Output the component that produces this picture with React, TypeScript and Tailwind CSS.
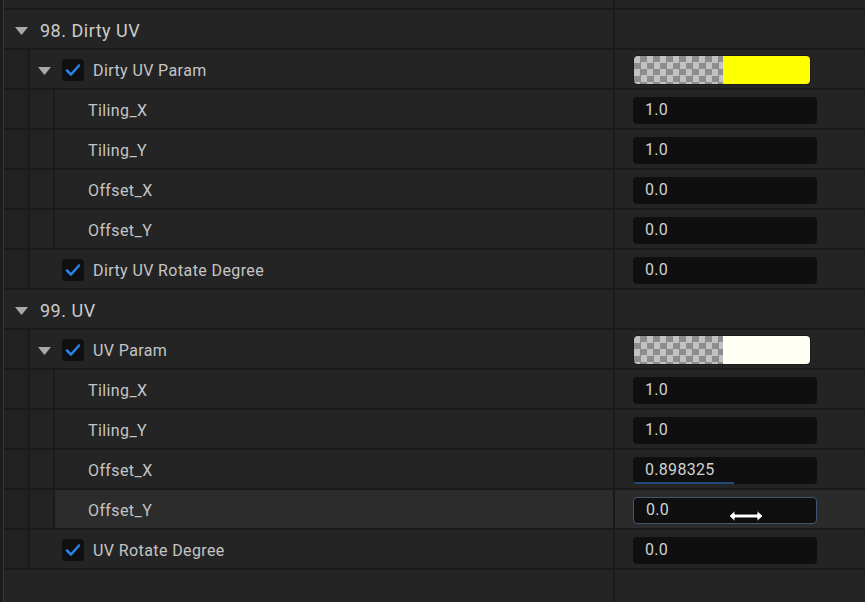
import React from "react";

type RowProps = {
  depth: number;
  highlight?: boolean;
  children: React.ReactNode;
  value?: React.ReactNode;
};

function Strip() {
  return <div className="w-[26px] shrink-0 bg-[#212121] border-r-2 border-[#1a1a1a]" />;
}

function Row({ depth, highlight, children, value }: RowProps) {
  return (
    <div className="flex h-10 border-b-2 border-[#1a1a1a]">
      <div className="flex w-[609px] shrink-0">
        {depth >= 1 && <Strip />}
        {depth >= 2 && <div className="w-[25px] shrink-0 bg-[#232323] border-r-2 border-[#1a1a1a]" />}
        <div className={"flex flex-1 items-center pt-[3px] " + (highlight ? "bg-[#2c2c2c]" : "")}>{children}</div>
      </div>
      <div
        className={
          "flex flex-1 items-center border-l-2 border-[#1a1a1a] pl-[18px] pt-[2px] " +
          (highlight ? "bg-[#2b2b2b]" : "")
        }
      >
        {value}
      </div>
    </div>
  );
}

function Arrow({ className }: { className?: string }) {
  return (
    <svg width="13" height="8" viewBox="0 0 13 8" className={className}>
      <path d="M0 0 H13 L6.5 8 Z" fill="#a9a9a9" />
    </svg>
  );
}

function Check() {
  return (
    <div className="flex h-[22px] w-[22px] shrink-0 items-center justify-center rounded-[4px] bg-[#0f0f0f]">
      <svg width="16" height="14" viewBox="0 0 16 14">
        <path d="M2 7.5 L6 11.5 L14 2.5" fill="none" stroke="#2a80e0" strokeWidth="2.6" strokeLinecap="round" strokeLinejoin="round" />
      </svg>
    </div>
  );
}

function NumBox({ v, focused, bar }: { v: string; focused?: boolean; bar?: number }) {
  return (
    <div
      className={
        "relative flex h-[27px] w-[184px] items-center overflow-hidden rounded-[4px] bg-[#0f0f0f] pl-[12px] text-[16px] tracking-[0.3px] text-[#d2d2d2] " +
        (focused ? "border border-[#3d5672]" : "")
      }
    >
      {v}
      {bar !== undefined && (
        <div className="absolute bottom-0 left-0 h-[2px] bg-[#1f4a7a]" style={{ width: `${bar}%` }} />
      )}
    </div>
  );
}

function Swatch({ color }: { color: string }) {
  return (
    <div className="flex h-[30px] w-[178px] overflow-hidden rounded-[5px] border border-[#1a1a1a]">
      <div className="w-[89px] bg-[conic-gradient(#8d8d8d_25%,#c2c2c2_0_50%,#8d8d8d_0_75%,#c2c2c2_0)] bg-[length:13px_13px]" />
      <div className="flex-1" style={{ background: color }} />
    </div>
  );
}

function Cursor() {
  return (
    <svg width="36" height="14" viewBox="0 0 36 14" className="absolute left-[95px] top-[12px]">
      <path
        d="M1 7 L7 1.5 V5 H29 V1.5 L35 7 L29 12.5 V9 H7 V12.5 Z"
        fill="#ffffff"
        stroke="#000000"
        strokeWidth="1"
        strokeLinejoin="round"
      />
    </svg>
  );
}

function Group({
  num,
  title,
  paramLabel,
  swatch,
  rotateLabel,
  values,
  focusIndex,
  barIndex,
}: {
  num: string;
  title: string;
  paramLabel: string;
  swatch: string;
  rotateLabel: string;
  values: string[];
  focusIndex?: number;
  barIndex?: number;
}) {
  const names = ["Tiling_X", "Tiling_Y", "Offset_X", "Offset_Y"];
  const label = "text-[16px] tracking-[0.4px] text-[#c4c4c4]";
  return (
    <>
      <Row depth={0}>
        <Arrow className="ml-[11px]" />
        <span className="ml-[12px] text-[18px] tracking-[0.5px] text-[#cbcbcb]">
          {num} {title}
        </span>
      </Row>
      <Row depth={1} value={<Swatch color={swatch} />}>
        <Arrow className="ml-[8px]" />
        <div className="ml-[11px] -mt-[2px]">
          <Check />
        </div>
        <span className={"ml-[9px] " + label}>{paramLabel}</span>
      </Row>
      {names.map((n, i) => (
        <Row
          key={n}
          depth={2}
          highlight={focusIndex === i}
          value={
            <div className="relative">
              <NumBox v={values[i]} focused={focusIndex === i} bar={barIndex === i ? 55 : undefined} />
              {focusIndex === i && <Cursor />}
            </div>
          }
        >
          <span className={"ml-[33px] " + label}>{n}</span>
        </Row>
      ))}
      <Row depth={1} value={<NumBox v="0.0" />}>
        <div className="ml-[32px] -mt-[2px]">
          <Check />
        </div>
        <span className={"ml-[9px] " + label}>{rotateLabel}</span>
      </Row>
    </>
  );
}

export default function App() {
  return (
    <div className="flex h-[602px] w-[865px] overflow-hidden bg-[#242424] font-['Roboto','Liberation_Sans',sans-serif]">
      <div className="w-[3px] bg-[#1c1c1c]" />
      <div className="w-px bg-[#3a3a3a]" />
      <div className="flex flex-1 flex-col">
        <div className="flex h-[10px] border-b-2 border-[#1a1a1a]">
          <div className="w-[609px]" />
          <div className="flex-1 border-l-2 border-[#1a1a1a]" />
        </div>
        <Group
          num="98."
          title="Dirty UV"
          paramLabel="Dirty UV Param"
          swatch="#ffff00"
          rotateLabel="Dirty UV Rotate Degree"
          values={["1.0", "1.0", "0.0", "0.0"]}
        />
        <Group
          num="99."
          title="UV"
          paramLabel="UV Param"
          swatch="#fffff4"
          rotateLabel="UV Rotate Degree"
          values={["1.0", "1.0", "0.898325", "0.0"]}
          focusIndex={3}
          barIndex={2}
        />
        <div className="flex flex-1">
          <div className="w-[609px]" />
          <div className="flex-1 border-l-2 border-[#1a1a1a]" />
        </div>
      </div>
    </div>
  );
}
